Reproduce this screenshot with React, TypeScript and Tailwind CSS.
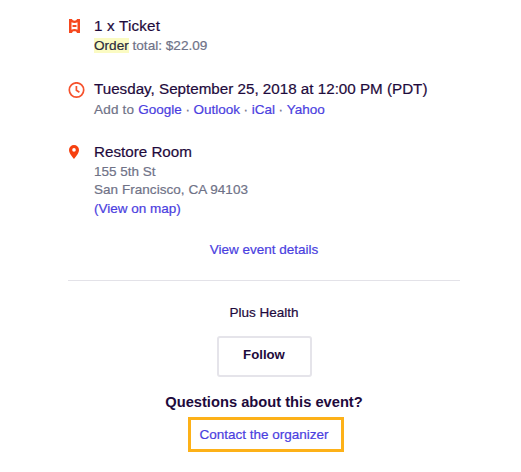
import type { ReactNode } from "react";

const calendars = ["Google", "Outlook", "iCal", "Yahoo"];

function TicketIcon() {
  return (
    <svg viewBox="0 0 11 14" className="mt-[3px] ml-px h-[14px] w-[11px]" fill="#f6481e" aria-hidden>
      <path
        fillRule="evenodd"
        d="M0 0h3c.3 1.300 1.200 1.700 2.500 1.700S7.700 1.300 8 0h3v14H8c-.3-1.300-1.200-1.700-2.500-1.700S3.300 12.700 3 14H0ZM2.500 3.200v7.600c.9-.5 1.800-.7 3-.7s2.100.2 3 .7V3.200c-.9.5-1.800.7-3 .7s-2.100-.2-3-.7Z"
      />
      <path d="M3.500 6h4v2h-4z" />
    </svg>
  );
}

function ClockIcon() {
  return (
    <svg viewBox="0 0 17 17" className="mt-[3px] size-[17px]" fill="none" stroke="#f6522d" aria-hidden>
      <circle cx="8.500" cy="8" r="7.200" strokeWidth="1.700" />
      <path d="M8.400 4v4.300l3 1.900" strokeWidth="1.700" />
    </svg>
  );
}

function PinIcon() {
  return (
    <svg viewBox="0 0 10 14" className="mt-[3px] ml-px h-[14px] w-[10px]" aria-hidden>
      <path
        d="M5 0a5 5 0 0 0-5 5c0 3.600 5 9 5 9s5-5.400 5-9a5 5 0 0 0-5-5Zm0 6.700a1.800 1.800 0 1 1 0-3.600 1.800 1.800 0 0 1 0 3.600Z"
        fill="#f6400f"
      />
    </svg>
  );
}

type DetailRowProps = {
  icon: ReactNode;
  title: ReactNode;
  children: ReactNode;
};

function DetailRow({ icon, title, children }: DetailRowProps) {
  return (
    <div className="flex">
      <div className="w-[26px] shrink-0">{icon}</div>
      <div className="text-[13.500px] leading-[18.500px] whitespace-nowrap text-[#6f7287]">
        <h3 className="pb-px text-[15.200px] leading-5 text-[#1e0a3c]">{title}</h3>
        {children}
      </div>
    </div>
  );
}

export default function App() {
  return (
    <main className="h-[472px] overflow-hidden bg-white pt-4 pl-[68px] font-['Liberation_Sans',Arial,sans-serif] [-webkit-text-stroke:0.2px_currentColor]">
      <div className="w-[392px]">
        <section className="flex flex-col gap-[23.500px]">
          <DetailRow icon={<TicketIcon />} title={<span className="tracking-[0.2px]">1 x Ticket</span>}>
            <p className="text-[13.600px]">
              <span className="bg-[#fbfbc3] text-[#2b2b3c]">Order</span> total: $22.09
            </p>
          </DetailRow>
          <DetailRow icon={<ClockIcon />} title="Tuesday, September 25, 2018 at 12:00 PM (PDT)">
            <p className="pt-px -mb-px">
              <span className="tracking-[0.200px]">Add to </span>
              {calendars.map((name, i) => (
                <span key={name}>
                  {i > 0 && <span className="tracking-[-0.100px]"> · </span>}
                  <a className="text-[#4a3ee0]">{name}</a>
                </span>
              ))}
            </p>
          </DetailRow>
          <DetailRow icon={<PinIcon />} title="Restore Room">
            <p className="leading-[18px]">155 5th St</p>
            <p className="leading-[18px] tracking-[0.040px]">San Francisco, CA 94103</p>
            <a className="block leading-5 text-[#4a3ee0]">(View on map)</a>
          </DetailRow>
        </section>

        <div className="mt-[21px] border-b border-[#e3e2e8] pb-5 text-center text-[13.500px] leading-5 text-[#4a3ee0]">
          <a>View event details</a>
        </div>

        <section className="flex flex-col items-center pt-[22px] text-[13.500px] leading-5 text-[#1e0a3c]">
          <p>Plus Health</p>
          <button className="mt-[13px] h-[41px] w-[95px] rounded-[3px] border-2 border-[#e5e4ea] pb-1 text-[13.200px] font-bold [-webkit-text-stroke:0]">
            Follow
          </button>
          <h4 className="mt-[15px] text-[14.700px] leading-5 font-bold [-webkit-text-stroke:0]">
            Questions about this event?
          </h4>
          <a className="mt-[5px] ml-1 flex h-[35px] w-[156px] items-center justify-center border-3 border-[#fdb118] pr-1 text-[#4a3ee0]">
            Contact the organizer
          </a>
        </section>
      </div>
    </main>
  );
}
